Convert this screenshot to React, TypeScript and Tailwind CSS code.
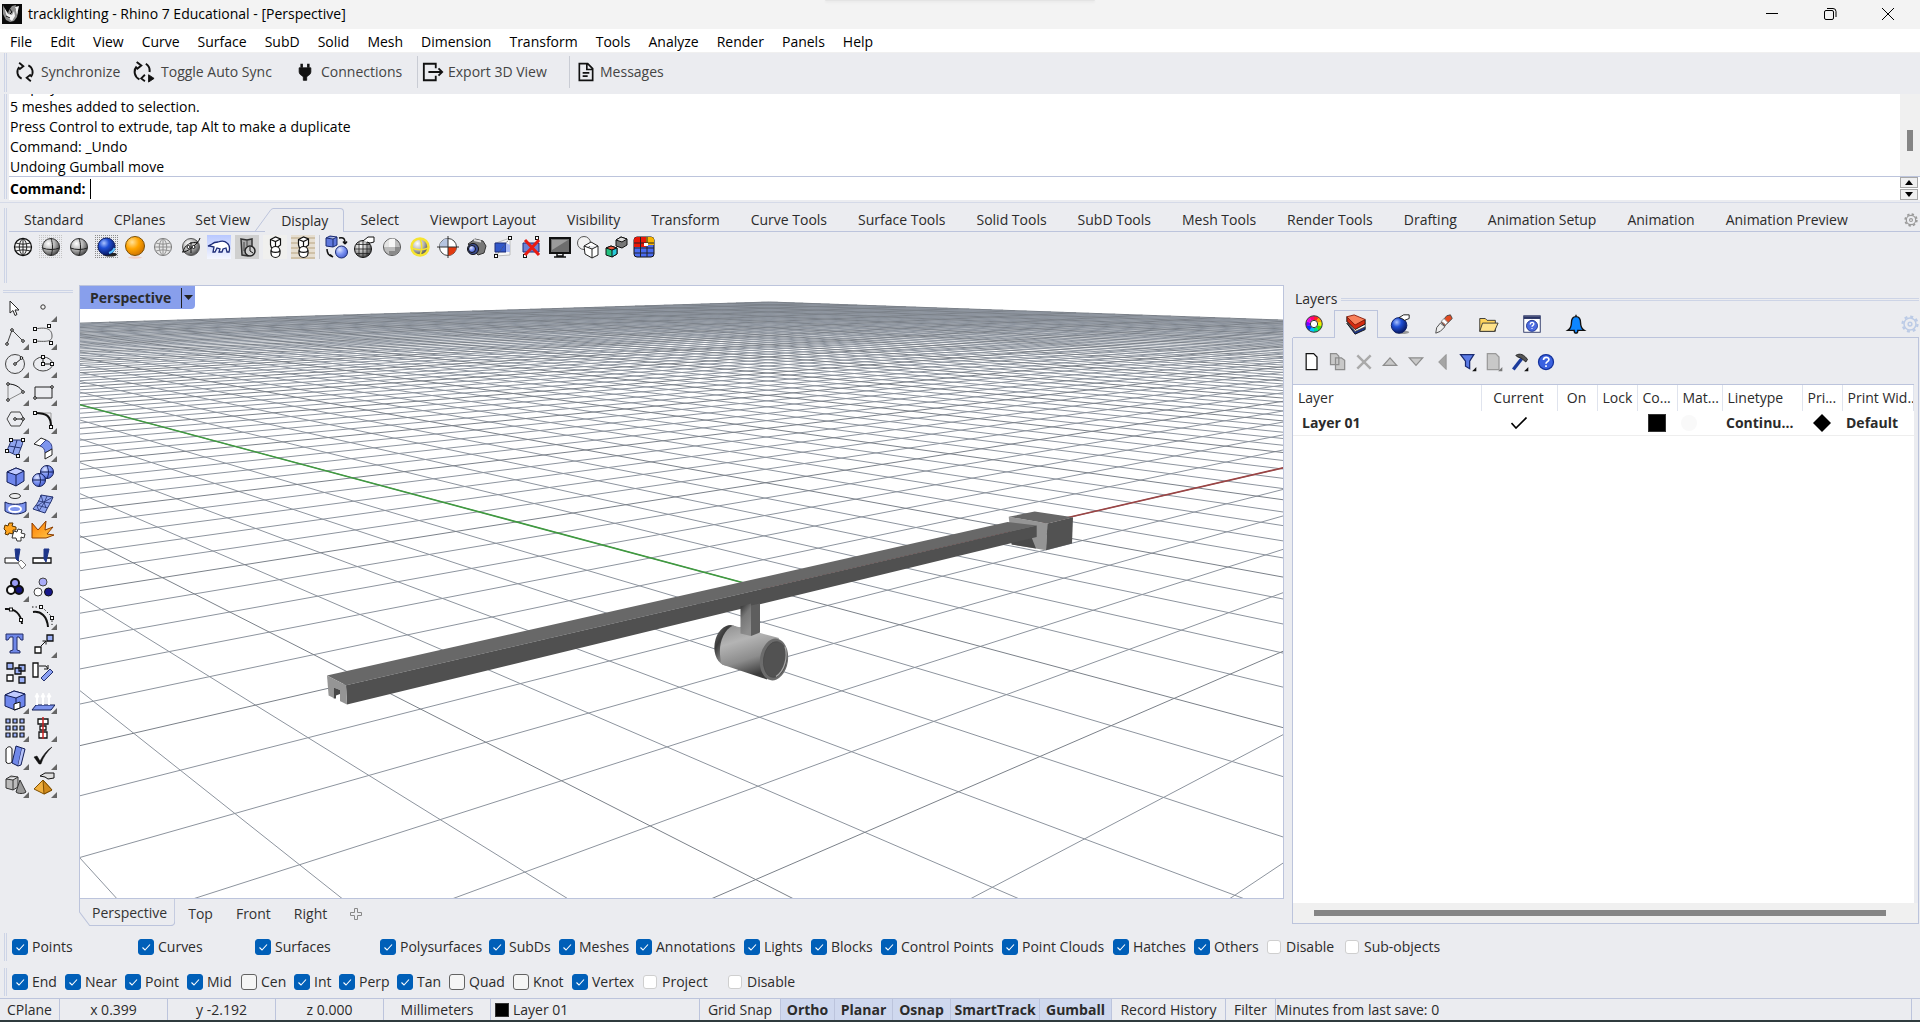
import type { ReactNode } from "react"

/* ---------- helpers ---------- */

function Svg({ children, className = "size-6" }: { children: ReactNode; className?: string }) {
    return (
        <svg viewBox="0 0 24 24" className={className} fill="none" stroke="#111" strokeWidth="1" aria-hidden="true">
            {children}
        </svg>
    )
}

function Gradients() {
    return (
        <svg className="absolute size-0" aria-hidden="true">
            <defs>
                <radialGradient id="gGray" cx="0.35" cy="0.3" r="0.75">
                    <stop offset="0" stopColor="#fff" />
                    <stop offset="0.5" stopColor="#b5b5b5" />
                    <stop offset="1" stopColor="#444" />
                </radialGradient>
                <radialGradient id="gBlue" cx="0.35" cy="0.3" r="0.75">
                    <stop offset="0" stopColor="#a9c2ff" />
                    <stop offset="0.4" stopColor="#1f4fd6" />
                    <stop offset="1" stopColor="#06145a" />
                </radialGradient>
                <radialGradient id="gOrange" cx="0.35" cy="0.3" r="0.8">
                    <stop offset="0" stopColor="#ffe29a" />
                    <stop offset="0.45" stopColor="#ffa400" />
                    <stop offset="1" stopColor="#c56a00" />
                </radialGradient>
                <radialGradient id="gPeri" cx="0.35" cy="0.3" r="0.8">
                    <stop offset="0" stopColor="#dfe6ff" />
                    <stop offset="0.5" stopColor="#7c93f2" />
                    <stop offset="1" stopColor="#4158c8" />
                </radialGradient>
                <linearGradient id="gBurst" x1="0" y1="0" x2="1" y2="1">
                    <stop offset="0" stopColor="#ff7a00" />
                    <stop offset="1" stopColor="#ffc94a" />
                </linearGradient>
                <linearGradient id="gSky" x1="0" y1="0" x2="0" y2="1">
                    <stop offset="0" stopColor="#b9c8ff" />
                    <stop offset="1" stopColor="#f4f6ff" />
                </linearGradient>
                <linearGradient id="gCyl" x1="0" y1="0" x2="0.35" y2="1">
                    <stop offset="0" stopColor="#8e8e8e" />
                    <stop offset="0.35" stopColor="#b4b4b4" />
                    <stop offset="0.7" stopColor="#8c8c8c" />
                    <stop offset="1" stopColor="#3c3c3c" />
                </linearGradient>
                <linearGradient id="gStem" x1="0" y1="0" x2="0.4" y2="1">
                    <stop offset="0" stopColor="#2c2c2c" />
                    <stop offset="0.45" stopColor="#777" />
                    <stop offset="1" stopColor="#8e8e8e" />
                </linearGradient>
                <linearGradient id="gBack" x1="0" y1="0" x2="1" y2="0.6">
                    <stop offset="0" stopColor="#6c6c6c" />
                    <stop offset="0.3" stopColor="#3a3a3a" />
                    <stop offset="0.7" stopColor="#9a9a9a" />
                </linearGradient>
                <pattern id="dots" width="2" height="2" patternUnits="userSpaceOnUse">
                    <rect width="1" height="1" fill="#8b8b8b" />
                </pattern>
                <pattern id="dotsLight" width="2" height="2" patternUnits="userSpaceOnUse">
                    <rect width="1" height="1" fill="#c4c4c4" />
                </pattern>
            </defs>
        </svg>
    )
}

const wires = <path d="M12 3.500v17M3.500 12h17M12 3.500c-5 4-5 13 0 17M12 3.500c5 4 5 13 0 17M5 8c4 1.500 10 1.500 14 0M5 16c4-1.500 10-1.500 14 0" />

const node = (x: number, y: number) => (
    <rect x={x - 1.5} y={y - 1.5} width="3" height="3" fill="#fff" stroke="#111" />
)
const dot = (x: number, y: number) => <circle cx={x} cy={y} r="1.3" fill="#fff" stroke="#111" />

/* box over cylinder used by the artistic and pen display modes */
const canShape = (
    <>
        <path d="M7.500 4.500l5-2.500 5 2v6l-4 3h-5l-1-3z" fill="#fff" />
        <path d="M7.500 4.500l5 2 5-2.500M12.500 6.500v5" />
        <rect x="8" y="11.500" width="9" height="11" rx="4.500" fill="#fff" />
        <path d="M8 15.500c1 2.500 8 2.500 9 0" />
    </>
)

/* ---------- display toolbar ---------- */

const displayTools: { name: string; icon: ReactNode }[] = [
    { name: "Wireframe", icon: <><circle cx="12" cy="12" r="8.500" fill="#f4f4f4" strokeWidth="1.300" /><g strokeWidth="0.900">{wires}</g></> },
    {
        name: "Shaded viewport",
        icon: <><rect width="24" height="24" fill="url(#dotsLight)" stroke="none" /><circle cx="12" cy="12" r="8.500" fill="url(#gGray)" stroke="#333" /><path d="M3.500 13c5 2 12 2 17 0M12 3.500c2 5 2 12 0 17" stroke="#222" /></>,
    },
    {
        name: "Shaded",
        icon: <><circle cx="12" cy="12" r="8.500" fill="url(#gGray)" stroke="#333" /><path d="M3.500 13c5 2 12 2 17 0M12 3.500c2 5 2 12 0 17" stroke="#222" /></>,
    },
    {
        name: "Rendered",
        icon: <><rect width="24" height="24" fill="url(#dots)" stroke="none" /><ellipse cx="15" cy="19.500" rx="7" ry="2" fill="#222" stroke="none" /><circle cx="11.500" cy="11.500" r="8.500" fill="url(#gBlue)" stroke="#0a1c66" /><path d="M14 18c3-1 5-3 5.500-5" stroke="#5cc3ff" strokeWidth="2" /></>,
    },
    { name: "Raytraced", icon: <><ellipse cx="12" cy="22.500" rx="7" ry="1.200" fill="#f1cfc6" stroke="none" /><circle cx="12" cy="11" r="9.500" fill="url(#gOrange)" stroke="#7b5006" /></> },
    { name: "Ghosted", icon: <><circle cx="12" cy="12" r="8.500" fill="#e6e6e6" stroke="#777" /><g stroke="#888" strokeWidth="0.900">{wires}</g></> },
    {
        name: "X-Ray",
        icon: <><circle cx="12" cy="12" r="8.500" fill="url(#gGray)" stroke="#555" /><path d="M3 17C8 18 20 8 21 3M4 17c1-7 9-11 15-9" /><circle cx="9.500" cy="12" r="1.500" fill="#fff" /><circle cx="14.500" cy="12" r="1.500" fill="#fff" /><path d="M12 7v11" /></>,
    },
    {
        name: "Arctic",
        icon: <><rect width="24" height="24" fill="url(#gSky)" stroke="none" /><path d="M1 11l4-2c2-2 4-2 6-2 3-1 7-1 9 1 3 2 3 5 2 9h-2l-1-4-3 1-1 3h-3l1-3-3-1-2 4H6l1-5-4-1z" fill="#fff" stroke="#1d2c78" strokeWidth="1.300" /></>,
    },
    {
        name: "Technical",
        icon: <><rect width="24" height="24" fill="#cfcfcf" stroke="none" /><path d="M6 4l6 1 5-1v11l-4 6-6-1z" fill="#a9a9a9" stroke="#333" strokeWidth="1.500" /><path d="M9 7v9M12 5v6" stroke="#444" /><circle cx="15" cy="16" r="5" fill="#cfcfcf" stroke="#222" strokeWidth="1.500" /><path d="M15 12v4l3 2" /></>,
    },
    { name: "Artistic", icon: <><rect width="24" height="24" fill="#f0f0ee" stroke="none" /><g strokeWidth="1.200">{canShape}</g></> },
    {
        name: "Pen",
        icon: <><rect width="24" height="24" fill="#e6ded0" stroke="none" /><path d="M0 3h24M0 8h24M0 13h24M0 18h24M0 23h24" stroke="#cfc1a8" strokeWidth="2" /><g strokeWidth="1.200">{canShape}</g></>,
    },
    {
        name: "Toggle shading",
        icon: <><path d="M2 3l4-2 7 1v8l-4 2-7-1zM2 3l7 1 4-2M9 4v8" fill="#5f78dc" stroke="#1a2a70" /><circle cx="17.500" cy="17" r="6" fill="url(#gPeri)" stroke="#1a2a70" /><path d="M15 3c5-1 6 1 6 5M21 9l-2-2.500M21 9l2-2.500M3 14c0 5 2 7 6 8M9 22l-3-2.500" strokeWidth="1.500" /></>,
    },
    {
        name: "Shade options",
        icon: <><circle cx="11" cy="14" r="8.500" fill="url(#gGray)" /><path d="M11 5.500v17M2.500 14h17M4 9.500h14M4 18.500h14M7 7v14M15 7v14" stroke="#222" strokeWidth="0.800" /><path d="M11 6l5-4h6v5l-4 1-3-1" fill="#fff" /></>,
    },
    { name: "Flat shade", icon: <><circle cx="12" cy="12" r="8.500" fill="#bcbcbc" stroke="#555" /><path d="M4 12h5V4.500A8 8 0 0 0 4 12z" fill="#e4e4e4" stroke="none" /><path d="M9 12h6V4a8 8 0 0 0-6 .4z" fill="#f6f6f6" stroke="none" /><path d="M15 12h5a8 8 0 0 1-5 7.500zM9 16h6v4H9z" fill="#8a8a8a" stroke="none" /></> },
    {
        name: "Shade selected",
        icon: <><circle cx="12" cy="12" r="8.500" fill="url(#gGray)" stroke="#f6e431" strokeWidth="2.500" /><path d="M3.500 13c5 2 12 2 17 0M12 3.500c2 5 2 12 0 17" stroke="#f6e431" strokeWidth="1.500" /></>,
    },
    {
        name: "Display target",
        icon: <><circle cx="12" cy="12" r="8.500" fill="#fff" stroke="#444" /><path d="M12 12V3.500A8.500 8.500 0 0 0 3.500 12z" fill="#b6c4e0" stroke="none" /><path d="M12 12h8.500a8.500 8.500 0 0 1-8.500 8.500z" fill="#e23a10" stroke="none" /><path d="M12 1v22M1 12h22" stroke="#333" /></>,
    },
    {
        name: "Capture",
        icon: <><path d="M4 9l7-5 8 2 3 5-2 7-6 2z" fill="#777" stroke="#333" /><path d="M10 5l7 1.500" stroke="#ddd" strokeWidth="2" /><circle cx="9" cy="14" r="5.500" fill="#3b4c8f" /><circle cx="8" cy="14" r="3.500" fill="url(#gPeri)" /></>,
    },
    {
        name: "Clipping plane",
        icon: <><path d="M18 3v17L4 21V8z" fill="#f7f7f7" stroke="#bbb" /><path d="M3 8h11v9H3z" fill="#3157c9" stroke="#1c2d78" /><path d="M14 8l4 2v7l-4 0" fill="#a9baf5" stroke="none" /><path d="M4 21L18 3" stroke="#555" strokeDasharray="1 1" />{node(4, 21)}{node(18, 3)}</>,
    },
    {
        name: "Disable clipping",
        icon: <><path d="M3 8h16v9H3z" fill="#6c83d6" stroke="#1c2d78" />{node(5, 21)}{node(17, 3)}<path d="M5 5l14 15M19 5L5 20" stroke="#e81b12" strokeWidth="3" /></>,
    },
    {
        name: "Full screen",
        icon: <><path d="M2 3h20v15H2z" fill="#6d6d6d" strokeWidth="2" /><path d="M4 5h16L4 15z" fill="#9b9b9b" stroke="none" /><path d="M9 18h6v3H9zM6 22h12" strokeWidth="1.500" /></>,
    },
    {
        name: "Silhouettes",
        icon: <><circle cx="8" cy="8" r="6.500" fill="#f2f2f2" stroke="#555" /><path d="M8 11l7-4 7 4v9l-6 3-7-4zM8 11l8 3 6-3M16 14v9" fill="#fff" stroke="#222" /></>,
    },
    {
        name: "Color by face",
        icon: <><path d="M12 5l5-3 6 2v6l-5 3-6-2z" fill="#777" /><path d="M12 5l6 2 5-3-6-2z" fill="#ddd" /><path d="M2 13l5-2 6 2v6l-5 3-6-2z" fill="#23c07d" /><path d="M2 13l6 2 5-2-6-2z" fill="#f05a3c" /><path d="M8 15l5-2v6l-5 3z" fill="#27c9d8" /></>,
    },
    {
        name: "Texture grid",
        icon: <><rect x="2" y="2" width="20" height="20" rx="3" fill="#4a6cf0" /><path d="M2 5a3 3 0 0 1 3-3h9v10H2z" fill="#e81708" stroke="none" /><path d="M14 2h5a3 3 0 0 1 3 3v5h-8z" fill="#f7b500" stroke="none" /><path d="M8.500 2v20M15 2v20M2 8h20M2 13h20M2 18h20" stroke="#22222a" /><rect x="12" y="8" width="4" height="3" fill="#fff" stroke="none" /></>,
    },
]

/* ---------- left tool palette ---------- */

const paletteTools: { name: string; icon: ReactNode; more?: boolean }[] = [
    { name: "Select", icon: <path d="M7 5v12l3-2.500 2 5 2-1-2-4.500h4z" fill="#fff" stroke="#222" /> },
    { name: "Point", icon: <circle cx="12" cy="11" r="2.200" fill="#f4f4f4" stroke="#333" />, more: true },
    { name: "Polyline", icon: <><path d="M4 20l5-14 11 11" stroke="#444" />{dot(4, 20)}{dot(9, 6)}{dot(20, 17)}</>, more: true },
    { name: "Curve", icon: <><path d="M4 5c14-3 17 2 17 7s-3 6-17 5" stroke="#555" />{node(4, 5)}{node(18, 2)}{node(4, 17)}{node(20, 19)}</>, more: true },
    { name: "Circle", icon: <><circle cx="12" cy="12" r="9.500" stroke="#444" /><path d="M12 12l7-6" />{dot(12, 12)}{dot(18.500, 6)}</>, more: true },
    { name: "Ellipse", icon: <><ellipse cx="12" cy="12" rx="9.500" ry="7" stroke="#444" /><path d="M12 12h9M12 12V5" />{node(12, 5)}{node(12, 12)}{node(21, 12)}</>, more: true },
    { name: "Arc", icon: <><path d="M5 4v16l15-8" stroke="#888" /><path d="M5 4c7 0 12 3 15 8" />{dot(5, 4)}{dot(20, 12)}{dot(5, 20)}</>, more: true },
    { name: "Rectangle", icon: <><path d="M4 7h17v11H4z" stroke="#222" />{dot(21, 7)}{dot(4, 18)}</>, more: true },
    { name: "Polygon", icon: <><path d="M8 4h9l4 7-4 7H8l-4-7z" stroke="#444" /><path d="M12 11h8" />{dot(12, 11)}{dot(20, 11)}</>, more: true },
    { name: "Fillet", icon: <><path d="M4 5h16v14" stroke="#999" /><path d="M4 5c12 0 16 3 16 14" strokeWidth="2" />{node(4, 5)}{node(20, 19)}</>, more: true },
    {
        name: "Surface from points",
        icon: <><path d="M8 4h12c0 5-3 9-5 16L4 15c1-4 3-6 4-11z" fill="#90a5ef" stroke="#23316f" /><path d="M14 4c-1 5-3 9-4 13M6 10l12 2" stroke="#23316f" />{node(8, 4)}{node(20, 4)}{node(4, 15)}{node(15, 20)}</>,
        more: true,
    },
    {
        name: "Loft",
        icon: <><path d="M3 8l7-6 5 2-6 6z" fill="#fff" stroke="#222" /><path d="M9 10l6-6c5 2 6 5 6 9l-7 4c0-4-2-6-5-7z" fill="#7d94ee" stroke="#33418a" /><path d="M14 17l7-4v6l-7 4z" fill="#fff" stroke="#222" /></>,
        more: true,
    },
    { name: "Box", icon: <><path d="M4 8l9-4 8 3v10l-8 5-9-4z" fill="#6e86ec" stroke="#111c55" /><path d="M4 8l9-4 8 3-8 4z" fill="#c1ccff" stroke="#111c55" /><path d="M13 11v11" stroke="#111c55" /></>, more: true },
    { name: "Boolean", icon: <><circle cx="16" cy="8" r="6.500" fill="url(#gPeri)" stroke="#111c55" /><circle cx="8" cy="16" r="6.500" fill="url(#gPeri)" stroke="#111c55" /><path d="M16 2c2 4 2 9 0 12M10 8h12M8 10c2 4 2 9 0 12M2 16h12" stroke="#111c55" /></>, more: true },
    { name: "Revolve surface", icon: <><ellipse cx="12" cy="4" rx="5.500" ry="2.500" fill="#eee" stroke="#333" /><path d="M2 10c5 3 16 3 21 0v9c-5 4-16 4-21 0z" fill="#7d94ee" stroke="#111c55" /><ellipse cx="12" cy="17" rx="6" ry="3" stroke="#fff" strokeWidth="2" /></>, more: true },
    { name: "Mesh", icon: <><path d="M10 3l12 2c-2 6-5 9-8 16L2 17c3-4 6-7 8-14z" fill="#90a5ef" stroke="#23316f" /><path d="M16 4c-2 6-5 10-8 15M7 9l12 2M5 13l12 3M10 3l2 7-6 4 2 5M22 5l-9 5 2 6" stroke="#23316f" strokeWidth="0.800" /></>, more: true },
    {
        name: "Group puzzle",
        icon: <><path d="M2 5l3 1 1-3h4l-1 3 4 1v3l-3 0 0 4-4-1-1 2-3-1 1-3-2-2z" fill="#ffa51e" stroke="#5a3500" /><path d="M11 11l3 1 1-3 4 1-1 3 4 1-1 4-3-1 0 4-4 0-1-3-4 0 1-4z" fill="#fff" stroke="#333" /></>,
    },
    { name: "Explode", icon: <path d="M1 3l6 7 8-9-1 9 8-3-6 7 7 1-8 3H1z" fill="url(#gBurst)" stroke="#8a3c00" /> },
    { name: "Trim", icon: <><path d="M2 10h12l3 5H2z" fill="#fff" /><path d="M12 1h5l-2 12-2-2z" fill="#1e368a" stroke="#1e368a" /><path d="M15 15l3-3 5 5-4 4z" fill="#fff" stroke="#777" /></> },
    { name: "Split", icon: <><path d="M2 10h18v5H2z" fill="#fff" strokeWidth="1.300" /><path d="M13 1h5l-3 13-2-3z" fill="#1e368a" stroke="#1e368a" /></> },
    { name: "Join", icon: <g strokeWidth="2"><circle cx="12" cy="7" r="4" fill="#9a9cf5" /><circle cx="8" cy="14" r="4" fill="#fff" /><circle cx="16" cy="14" r="4" fill="#15157a" /></g>, more: true },
    { name: "Ungroup", icon: <><circle cx="12" cy="6" r="4" fill="#a9abf7" stroke="#444" /><circle cx="7" cy="16" r="4" fill="#fff" stroke="#444" /><circle cx="17.500" cy="16" r="4" fill="#17178a" stroke="#111" /></> },
    { name: "Edit points", icon: <><path d="M2 5c10-1 16 5 17 15" strokeWidth="2" />{node(8, 5.500)}{node(18, 16)}</> },
    { name: "Control points", icon: <><path d="M2 8c8-1 14 4 15 15" strokeWidth="2" /><path d="M1 3h8M11 3l10 10v8" strokeDasharray="1.500 2" />{node(10, 3)}{node(21, 14)}</>, more: true },
    { name: "Text object", icon: <path d="M3 2h17v6h-2l-2-3h-2v13l3 1v2H7v-2l3-1V5H7L5 8H3z" fill="#7088e8" stroke="#222c66" /> },
    { name: "Move", icon: <><path d="M4 15h6v6H4z" fill="#fff" strokeWidth="1.300" /><path d="M16 3h6v6h-6z" fill="#9bb0f7" strokeWidth="1.300" /><path d="M10 14l5-5M11.500 9H15v3.500" /></>, more: true },
    { name: "Copy", icon: <><path d="M4 3h6v6H4zM12 8h6v6h-6zM16 17h6v6h-6zM16 5h6v6h-6z" fill="#9bb0f7" strokeWidth="1.300" /><path d="M4 15h6v6H4z" fill="#fff" strokeWidth="1.300" /></> },
    { name: "Rotate", icon: <><path d="M2 3h5v14H2z" fill="#fff" strokeWidth="1.300" /><path d="M8 6h7l2 3M17 5v4h-4" /><path d="M10 18l9-9 3 3-9 9z" fill="#8ba0f3" stroke="#23316f" /></> },
    { name: "Cut box", icon: <><path d="M2 7l9-4 11 3v12l-10 4-10-4z" fill="#6e86ec" stroke="#111c55" /><path d="M2 7l9-4 11 3-9 4z" fill="#c1ccff" stroke="#111c55" /><path d="M13 10v6" stroke="#111c55" /><path d="M11 16l6-2v6l-6 2z" fill="#fff" /></>, more: true },
    { name: "Project", icon: <><path d="M5 17h19l-4 5H1z" fill="#7d94ee" stroke="#111c55" /><path d="M6 17V8M12 17V8M18 17V8" stroke="#fff" strokeWidth="2" /><path d="M4 9l2-4 2 4zM10 9l2-4 2 4zM16 9l2-4 2 4z" fill="#fff" stroke="#fff" /></>, more: true },
    { name: "Array", icon: <path d="M3 3h4v4H3zM10 3h4v4h-4zM17 3h4v4h-4zM3 10h4v4H3zM10 10h4v4h-4zM17 10h4v4h-4zM3 17h4v4H3zM10 17h4v4h-4zM17 17h4v4h-4z" fill="#9bb0f7" strokeWidth="1.200" />, more: true },
    { name: "Align", icon: <><path d="M7 3h10v5H7zM9 10h6v4H9zM8 16h8v6H8z" fill="#fff" strokeWidth="1.300" /><path d="M12 1v22" stroke="#c22" strokeWidth="1.500" /></>, more: true },
    { name: "Flow", icon: <><path d="M3 5c2-3 5-3 6 0v13c-2 2-5 2-6 0z" fill="#fff" /><path d="M13 2l6 2-4 18-6-3z" fill="#7088e8" stroke="#111c55" /><path d="M19 4l3 1-4 16-3 1" fill="#b5c2fa" stroke="#111c55" /></>, more: true },
    { name: "Check", icon: <path d="M3 13l3-1 3 5C12 11 16 6 21 3c-5 5-9 10-11 17H8z" fill="#111" strokeWidth="0.500" />, more: true },
    { name: "Primitives", icon: <><path d="M3 7l5-3 7 1v10l-5 3-7-2zM3 7l7 1 5-3M10 8v10" fill="#bbb" stroke="#333" /><path d="M17 8l6 12c-2 2-8 2-10 0z" fill="#999" stroke="#333" /></>, more: true },
    { name: "Render view", icon: <><path d="M12 8l9 10-8 4-10-5z" fill="#f0b040" stroke="#7d4e00" /><path d="M12 8l1 14 8-4z" fill="#d08a1c" stroke="#7d4e00" /><path d="M9 4l5-3h9v5l-6 1-3-2z" fill="#ddd" /></>, more: true },
]

/* ---------- layers panel ---------- */

const hue = ["#ff2020", "#ff9a00", "#e9f200", "#3fe000", "#00dd91", "#00c3ff", "#0037ff", "#7900ff", "#f000e8", "#ff0074"]

const panelTabs: { name: string; icon: ReactNode }[] = [
    {
        name: "Properties",
        icon: <>{hue.map((c, i) => <circle key={c} cx="12" cy="12" r="6.500" stroke={c} strokeWidth="4.500" strokeDasharray="4.200 40" transform={`rotate(${i * 36 - 90} 12 12)`} />)}<circle cx="12" cy="12" r="9" stroke="#222" /><circle cx="12" cy="12" r="4" fill="#fff" stroke="#222" /></>,
    },
    {
        name: "Layers",
        icon: <><path d="M2 10l9 12 11-5v-3L11 19z" fill="#1a3590" /><path d="M2 8l9 11 11-5v-3L11 15z" fill="#fff" stroke="#555" /><path d="M2 3l9 8 11-5v5l-11 6L2 8z" fill="#d42a10" /><path d="M2 3l8-2 12 5-11 6z" fill="#f9805a" stroke="#8a1a08" /></>,
    },
    { name: "Materials", icon: <><ellipse cx="14" cy="21" rx="8" ry="2" fill="#999" stroke="none" /><circle cx="11" cy="13.500" r="8.500" fill="url(#gBlue)" stroke="#0a1c66" /><path d="M11 5l5-3h6v4l-5 2-3-2z" fill="#fff" /></> },
    { name: "Material library", icon: <><path d="M15 3l4-1 2 4-8 8-4-4z" fill="#e24b22" stroke="#444" /><path d="M12 6l4 4-2 3-5-4z" fill="#fff" stroke="#888" /><path d="M8 11l5 4-5 5-5 2 1-6z" fill="#eee" stroke="#444" /></> },
    { name: "Libraries", icon: <><path d="M3 6h6l2 2h9v12H3z" fill="#ffd35a" stroke="#333" /><path d="M6 11h17l-4 9H3z" fill="#ffe28a" stroke="#333" /></> },
    {
        name: "Help",
        icon: <><rect x="3" y="3" width="18" height="18" fill="#fff" stroke="#2a3566" /><path d="M3 5h18" stroke="#2a3566" strokeWidth="3" /><circle cx="12" cy="14" r="6" fill="#4c6be0" stroke="#1d338f" /><path d="M10 12.500c0-3 4-3 4-.5 0 1.500-2 1.500-2 3M12 16.500v1" stroke="#fff" strokeWidth="1.500" /></>,
    },
    { name: "Notifications", icon: <path d="M12 2v2c-4 0-5 3-5 7 0 4-1 6-4 8h7c0 4 4 4 4 0h7c-3-2-4-4-4-8 0-4-1-7-5-7" fill="#0d86ff" stroke="#111" strokeWidth="1.500" /> },
]

const layerTools: { name: string; icon: ReactNode }[] = [
    { name: "New layer", icon: <path d="M5 2h9l4 4v15H5z" fill="#fff" strokeWidth="1.500" /> },
    { name: "New sublayer", icon: <path d="M3 2h7l3 3v10H3zM9 7h7l4 3v11H9z" fill="#c8c8c8" stroke="#8d8d8d" strokeWidth="1.500" /> },
    { name: "Delete", icon: <path d="M4 4l16 16M20 4L4 20" stroke="#aaa" strokeWidth="3" /> },
    { name: "Move up", icon: <path d="M12 7l8 9H4z" fill="#c9c9c9" stroke="#8d8d8d" strokeWidth="1.500" /> },
    { name: "Move down", icon: <path d="M4 7h16l-8 9z" fill="#c9c9c9" stroke="#8d8d8d" strokeWidth="1.500" /> },
    { name: "Move out", icon: <path d="M17 3v18l-9-9z" fill="#a5a5a5" stroke="#8d8d8d" /> },
    { name: "Filter", icon: <><path d="M3 3h16l-5 8v9l-5-3v-6z" fill="#5b7be6" stroke="#1a2a70" strokeWidth="1.500" /><path d="M22 18v5h-5z" fill="#111" stroke="none" /></> },
    { name: "Layer state", icon: <><path d="M4 2h10l4 4v15H4z" fill="#c8c8c8" stroke="#999" strokeWidth="1.500" /><path d="M22 18v5h-5z" fill="#777" stroke="none" /></> },
    { name: "Tools", icon: <><path d="M4 21L14 8" stroke="#1d3c9c" strokeWidth="4" /><path d="M7 4c5-3 10-1 14 5l-2 3-6-5-4-1z" fill="#555" /><path d="M22 18v5h-5z" fill="#111" stroke="none" /></> },
    { name: "Layer help", icon: <><circle cx="12" cy="12" r="9" fill="#3b62e0" stroke="#14329c" strokeWidth="1.500" /><path d="M9 9.500c0-4 6.500-4 6.500-.5 0 2.500-3.500 2.500-3.500 5M12 16v2" stroke="#fff" strokeWidth="2" /></> },
]

/* ---------- perspective construction plane ---------- */

const GRID = 70
const ORIGIN = [762.7, 588.5]
const VANISH_X = [2190, 259]
const VANISH_Y = [-465, 259]
const GX = 0.0437
const GY = 0.0502

function project(x: number, y: number) {
    const w = 1 + GX * x + GY * y
    const px = (ORIGIN[0] + GX * x * VANISH_X[0] + GY * y * VANISH_Y[0]) / w
    const py = (ORIGIN[1] + GX * x * VANISH_X[1] + GY * y * VANISH_Y[1]) / w
    return `${px.toFixed(1)} ${py.toFixed(1)}`
}

function gridPath(major: boolean) {
    let d = ""
    for (let k = -GRID; k <= GRID; k++) {
        if ((k % 5 === 0) !== major) continue
        // stop each line just before it passes behind the camera
        const nearY = Math.max(-GRID, (0.12 - 1 - GX * k) / GY)
        if (nearY < GRID) d += `M${project(k, nearY)}L${project(k, GRID)}`
        const nearX = Math.max(-GRID, (0.12 - 1 - GY * k) / GX)
        if (nearX < GRID) d += `M${project(nearX, k)}L${project(GRID, k)}`
    }
    return d
}

const minorGrid = gridPath(false)
const majorGrid = gridPath(true)

function Scene() {
    return (
        <svg viewBox="80 286 1203 613" preserveAspectRatio="xMidYMid slice" className="absolute inset-0 size-full" aria-label="Perspective view">
            <path d={minorGrid} stroke="#8d949e" strokeWidth="1" fill="none" />
            <path d={majorGrid} stroke="#7b8189" strokeWidth="1" fill="none" />
            <path d={`M${project(0, 0)}L${project(0, GRID)}`} stroke="#3f9a3f" strokeWidth="1.600" />
            <path d={`M${project(0, 0)}L${project(GRID, 0)}`} stroke="#9b4444" strokeWidth="1.600" />

            {/* power feed */}
            <path d="M1008.700 517.300L1047.400 524 1046 550.700 1011.700 545z" fill="#959595" />
            <path d="M1011 541L1030 534 1036 549 1011.700 545z" fill="#4a4a4a" />
            <path d="M1047.400 524L1073 517.700 1072 544 1046 550.700z" fill="#525252" />
            <path d="M1008.700 517.300L1034.700 512 1073 517.700 1047.400 524z" fill="#676767" />

            {/* track */}
            <path d="M327 676L1007.600 522.500 1036.700 526 346 685.700z" fill="#686868" />
            <path d="M346 685.700L1036.700 526V537.500L347 705z" fill="#505050" />
            <path d="M327 676L346 685.700 347 705 328.600 696z" fill="#959595" />
            <path d="M333.700 688L340 690.500V702.500L333.700 699z" fill="#fff" />
            <path d="M333.700 688L340 690.500V694.500L336 696V699L333.700 699z" fill="#484848" />

            {/* lamp */}
            <ellipse cx="729" cy="646" rx="14.500" ry="20.500" transform="rotate(8 729 646)" fill="url(#gBack)" />
            <path d="M733 626L779 638.500 767 680 722 665C717 650 721 632 733 626z" fill="url(#gCyl)" />
            <path d="M740.500 607L751 604V636.500L740.500 634z" fill="url(#gStem)" />
            <path d="M751 606L760 604V633L751 636.500z" fill="#5e5e5e" />
            <ellipse cx="774" cy="660" rx="14" ry="21" transform="rotate(8 774 660)" fill="#6c6c6c" />
            <ellipse cx="775" cy="660" rx="11.500" ry="18" transform="rotate(8 775 660)" fill="#525252" stroke="#444" strokeWidth="0.500" />
            <path d="M785 647C788 657 785 671 776 677" fill="none" stroke="#a8a8a8" strokeWidth="1.200" />
        </svg>
    )
}

/* ---------- data ---------- */

const menus = ["File", "Edit", "View", "Curve", "Surface", "SubD", "Solid", "Mesh", "Dimension", "Transform", "Tools", "Analyze", "Render", "Panels", "Help"]
const tabsBefore = ["Standard", "CPlanes", "Set View"]
const tabsAfter = [
    "Select", "Viewport Layout", "Visibility", "Transform", "Curve Tools", "Surface Tools", "Solid Tools", "SubD Tools",
    "Mesh Tools", "Render Tools", "Drafting", "Animation Setup", "Animation", "Animation Preview",
]

type Check = { label: string; state?: "off" | "disabled"; width?: string }

const filters: Check[] = [
    { label: "Points", width: "w-[126px]" },
    { label: "Curves", width: "w-[117px]" },
    { label: "Surfaces", width: "w-[125px]" },
    { label: "Polysurfaces", width: "w-[109px]" },
    { label: "SubDs", width: "w-[70px]" },
    { label: "Meshes", width: "w-[77px]" },
    { label: "Annotations", width: "w-[108px]" },
    { label: "Lights", width: "w-[67px]" },
    { label: "Blocks", width: "w-[70px]" },
    { label: "Control Points", width: "w-[121px]" },
    { label: "Point Clouds", width: "w-[111px]" },
    { label: "Hatches", width: "w-[81px]" },
    { label: "Others", width: "w-[72px]" },
    { label: "Disable", state: "disabled", width: "w-[78px]" },
    { label: "Sub-objects", state: "disabled" },
]

const snaps: Check[] = [
    { label: "End", width: "w-[53px]" },
    { label: "Near", width: "w-[60px]" },
    { label: "Point", width: "w-[62px]" },
    { label: "Mid", width: "w-[54px]" },
    { label: "Cen", state: "off", width: "w-[53px]" },
    { label: "Int", width: "w-[45px]" },
    { label: "Perp", width: "w-[58px]" },
    { label: "Tan", width: "w-[52px]" },
    { label: "Quad", state: "off", width: "w-[64px]" },
    { label: "Knot", state: "off", width: "w-[59px]" },
    { label: "Vertex", width: "w-[70px]" },
    { label: "Project", state: "disabled", width: "w-[85px]" },
    { label: "Disable", state: "disabled" },
]

function CheckRow({ items, prefix }: { items: Check[]; prefix: string }) {
    return (
        <div className="flex h-[35px] items-center">
            <div className="ml-1 mr-[5px] h-7 w-[3px] border-x border-[#cdd4e6]" />
            {items.map((item) => {
                const id = `${prefix}-${item.label}`
                return (
                    <div key={id} className={`flex shrink-0 items-center whitespace-nowrap ${item.width ?? ""}`}>
                        <span className="relative mr-1 size-4">
                            <input
                                id={id}
                                type="checkbox"
                                defaultChecked={!item.state}
                                disabled={item.state === "disabled"}
                                className="peer block size-4 appearance-none rounded-[3px] border border-[#626262] bg-[#f5f5f5] checked:border-[#005fb8] checked:bg-[#005fb8] disabled:m-px disabled:size-3.5 disabled:border-[#cfcfcf] disabled:bg-white"
                            />
                            <svg viewBox="0 0 16 16" className="pointer-events-none absolute inset-0 hidden peer-checked:block" aria-hidden="true">
                                <path d="M4.500 8.500l2.500 2.500 5-5.500" fill="none" stroke="#fff" strokeWidth="1.100" />
                            </svg>
                        </span>
                        <label htmlFor={id}>{item.label}</label>
                    </div>
                )
            })}
        </div>
    )
}

function Gear({ className }: { className: string }) {
    return (
        <svg viewBox="0 0 24 24" className={className} fill="none" stroke="currentColor" strokeWidth="2" aria-hidden="true">
            <circle cx="12" cy="12" r="8" />
            <circle cx="12" cy="12" r="10" strokeDasharray="4 3.850" strokeWidth="3" />
            <circle cx="12" cy="12" r="2.500" />
        </svg>
    )
}

function Grip() {
    return <div className="ml-1 w-[3px] shrink-0 border-x border-[#cdd4e6]" />
}

const modes = [
    { label: "Ortho", width: "w-[54px]" },
    { label: "Planar", width: "w-[58px]" },
    { label: "Osnap", width: "w-[58px]" },
    { label: "SmartTrack", width: "w-[89px]" },
    { label: "Gumball", width: "w-[72px]" },
]

/* ---------- page ---------- */

export default function App() {
    return (
        <div className="flex h-screen min-h-[700px] flex-col overflow-hidden bg-[#ebecf0] font-['Open_Sans','Noto_Sans',sans-serif] text-[14px] leading-5 text-[#2b2b2b]">
            <Gradients />

            {/* Title bar */}
            <header className="relative flex h-[29px] shrink-0 items-center bg-[#f3f3f3] pb-px pl-0.5 text-black">
                <div className="absolute left-1/2 top-0 h-px w-[270px] -translate-x-1/2 rounded-b bg-[#e4e4e4] shadow-sm" />
                <svg viewBox="0 0 20 20" className="mr-1.5 size-5" aria-hidden="true">
                    <rect width="20" height="20" fill="#0a0a0a" />
                    <path d="M1 1l2 5 3 3 1-3 3-4 4-1-1 4 3 3-1 5-3 4-4 1-4-2-3-6z" fill="#8d8d8d" />
                    <path d="M2 3l4 7 4 1 2-4 1 5-3 5-5-4zM13 3l4-1-2 9z" fill="#f4f4f4" />
                    <path d="M7 4l3 4-2 2M4 12l4 2" stroke="#111" fill="none" />
                </svg>
                <h1 className="flex-1">tracklighting - Rhino 7 Educational - [Perspective]</h1>
                <button aria-label="Minimize" className="flex h-full w-[58px] items-center justify-center">
                    <svg viewBox="0 0 14 14" className="size-3.5" stroke="#000" fill="none"><path d="M1 6.500h12" /></svg>
                </button>
                <button aria-label="Restore" className="flex h-full w-[58px] items-center justify-center">
                    <svg viewBox="0 0 14 14" className="size-3.5" stroke="#000" fill="none"><rect x="1.500" y="3.500" width="9" height="9" rx="1.500" /><path d="M4 1.500h6a3 3 0 0 1 3 3V10" /></svg>
                </button>
                <button aria-label="Close" className="mr-[3px] flex h-full w-[58px] items-center justify-center">
                    <svg viewBox="0 0 14 14" className="size-3.5" stroke="#000" fill="none"><path d="M1 1l12 12M13 1L1 13" /></svg>
                </button>
            </header>

            <nav className="flex h-[23px] shrink-0 items-center gap-[18px] bg-white pl-2.5 pt-0.5 text-black">
                {menus.map((m) => (
                    <button key={m}>{m}</button>
                ))}
            </nav>

            {/* Sync toolbar */}
            <div className="flex h-[42px] shrink-0 border-t border-[#f0f0f0] pb-0.5">
                <Grip />
                <div className="flex h-[37px] items-center whitespace-nowrap pl-2 text-[#444]">
                    <button className="flex w-[118px] items-center gap-1.5">
                        <Svg className="size-5">
                            <path d="M8 20A9 9 0 0 1 5 6M16 4a9 9 0 0 1 3 14M5 1l5 4-5 4M19 23l-5-4 5-4" strokeWidth="2.200" />
                        </Svg>
                        Synchronize
                    </button>
                    <button className="flex w-[162px] items-center gap-1.5">
                        <Svg className="size-[22px]">
                            <path d="M7 20A9 9 0 0 1 4 6M14 3a9 9 0 0 1 4 9M4 1l5 4-5 4" strokeWidth="2.200" />
                            <path d="M13 15l-4 4 4 3" strokeWidth="2" />
                            <path d="M17 15l6 4-6 4z" fill="#111" />
                        </Svg>
                        Toggle Auto Sync
                    </button>
                    <button className="flex w-[122px] items-center gap-1.5">
                        <Svg className="size-5">
                            <path d="M8 2v5M16 2v5" strokeWidth="3" />
                            <path d="M5 7h14v5c0 3-3 4-4 5h-6c-1-1-4-2-4-5zM10 17h4v5h-4z" fill="#111" />
                        </Svg>
                        Connections
                    </button>
                    <div className="mr-1 h-8 w-px bg-[#c9ccd4]" />
                    <button className="flex w-[147px] items-center gap-1">
                        <Svg className="size-[22px]">
                            <path d="M15 8V3H2v18h13v-5M7 12h15M18 8l4 4-4 4" strokeWidth="2" />
                        </Svg>
                        Export 3D View
                    </button>
                    <div className="mr-1.5 h-8 w-px bg-[#c9ccd4]" />
                    <button className="flex items-center gap-1">
                        <Svg className="size-5">
                            <path d="M4 2h10l6 6v14H4zM13 2v7h7M8 13h8M8 17h6" strokeWidth="2" />
                        </Svg>
                        Messages
                    </button>
                </div>
            </div>

            {/* Command history and prompt */}
            <section className="flex h-[109px] shrink-0 border-b border-[#d5dae8] pb-[3px]">
                <Grip />
                <div className="ml-0.5 flex min-w-0 flex-1 flex-col text-black">
                    <div className="flex h-[83px] border-b border-[#bcc4dc] bg-white">
                        <div className="flex flex-1 flex-col justify-end overflow-hidden pl-px">
                            <div className="-mb-px">
                                <p>Display</p>
                                <p>5 meshes added to selection.</p>
                                <p>Press Control to extrude, tap Alt to make a duplicate</p>
                                <p>Command: _Undo</p>
                                <p>Undoing Gumball move</p>
                            </div>
                        </div>
                        <div className="flex w-5 justify-center bg-[#f0f0f0] pt-9">
                            <div className="h-[21px] w-1.5 bg-[#858585]" />
                        </div>
                    </div>
                    <div className="flex h-[23px] items-center bg-white pl-px">
                        <label htmlFor="command" className="font-bold">Command:</label>
                        <div className="ml-1 h-5 w-px bg-black" />
                        <input id="command" type="text" className="h-5 flex-1 outline-none" />
                        <div className="flex w-5 flex-col gap-px">
                            <button aria-label="Previous" className="flex h-[11px] w-[18px] items-center justify-center border border-[#a8a8a8] bg-[#f0f0f0]">
                                <svg viewBox="0 0 8 5" className="h-[5px] w-2"><path d="M0 5l4-5 4 5z" /></svg>
                            </button>
                            <button aria-label="Next" className="flex h-[11px] w-[18px] items-center justify-center border border-[#a8a8a8] bg-[#f0f0f0]">
                                <svg viewBox="0 0 8 5" className="h-[5px] w-2"><path d="M0 0h8L4 5z" /></svg>
                            </button>
                        </div>
                    </div>
                </div>
            </section>

            {/* Tabbed tool bars */}
            <section className="flex h-20 shrink-0 pt-[5px]">
                <Grip />
                <div className="ml-0.5 min-w-0 flex-1">
                    <div className="flex h-6 items-end whitespace-nowrap">
                        <div className="flex h-6 items-center border-b border-[#bcc4dc]">
                            {tabsBefore.map((t) => (
                                <button key={t} className="px-[15px]">{t}</button>
                            ))}
                        </div>
                        <svg viewBox="0 0 20 24" className="-ml-3 h-6 w-5 shrink-0" fill="none" stroke="#bcc4dc"><path d="M0 23.500h2L18 1.500l2-1" /></svg>
                        <button className="h-6 rounded-tr border-r border-t border-[#bcc4dc] pl-2 pr-[15px]">Display</button>
                        <div className="flex h-6 flex-1 items-center border-b border-[#bcc4dc]">
                            {tabsAfter.map((t) => (
                                <button key={t} className="pl-4 pr-[15px]">{t}</button>
                            ))}
                            <button aria-label="Options" className="ml-auto mr-0.5 text-[#9a9a9a]"><Gear className="size-3.5" /></button>
                        </div>
                    </div>
                    <div className="flex h-[30px] items-center pl-0.5">
                        <div className="flex gap-1">
                            {displayTools.slice(0, 11).map((t) => (
                                <button key={t.name} aria-label={t.name}><Svg>{t.icon}</Svg></button>
                            ))}
                        </div>
                        <div className="mx-1 h-6 w-px bg-[#c4c7d0]" />
                        <div className="flex gap-1">
                            {displayTools.slice(11).map((t) => (
                                <button key={t.name} aria-label={t.name}><Svg>{t.icon}</Svg></button>
                            ))}
                        </div>
                    </div>
                </div>
            </section>

            {/* Palette, viewport, panels */}
            <main className="flex min-h-0 flex-1">
                <aside className="w-[79px] shrink-0 pt-[7px]">
                    <div className="mb-px ml-[3px] h-[3px] w-[70px] border-y border-[#cdd4e6]" />
                    <div className="grid w-14 grid-cols-2 pl-px">
                        {paletteTools.map((t) => (
                            <button key={t.name} aria-label={t.name} className="relative flex size-7 items-center justify-center">
                                <Svg>{t.icon}</Svg>
                                {t.more && (
                                    <svg viewBox="0 0 6 6" className="absolute bottom-0 right-0 size-1.5" aria-hidden="true">
                                        <path d="M6 0v6H0z" fill="#666" />
                                    </svg>
                                )}
                            </button>
                        ))}
                    </div>
                </aside>

                <section className="flex min-w-0 flex-1 flex-col">
                    <div className="relative mt-0.5 flex-1 overflow-hidden border border-[#bcc4dc] bg-white">
                        <Scene />
                        <button className="absolute left-0 top-0 flex h-[23px] items-center rounded-br bg-[#889fec] pl-2.5 font-bold">
                            Perspective
                            <span className="ml-2.5 h-5 w-px bg-[#222]" />
                            <svg viewBox="0 0 9 5" className="mx-0.5 h-[5px] w-[9px]"><path d="M0 0h9L4.500 5z" fill="#222" /></svg>
                        </button>
                    </div>
                    <div className="flex h-7 items-center gap-[23px] pt-px text-[#333]">
                        <button className="relative -mt-px h-[27px] self-start pl-[13px] pr-2">
                            <svg viewBox="0 0 95 27" preserveAspectRatio="none" className="absolute inset-0 size-full" fill="none" stroke="#bcc4dc" aria-hidden="true">
                                <path d="M.5 0v13l10 13.500h80q4 0 4-4V0" />
                            </svg>
                            Perspective
                        </button>
                        <button className="-ml-2.5">Top</button>
                        <button>Front</button>
                        <button>Right</button>
                        <button aria-label="New viewport">
                            <svg viewBox="0 0 12 12" className="size-3" fill="none" stroke="#888"><path d="M4.500.5h3v4h4v3h-4v4h-3v-4h-4v-3h4z" /></svg>
                        </button>
                    </div>
                </section>

                <aside className="ml-2 flex w-[628px] shrink-0 flex-col pb-[3px] pr-px pt-[5px]">
                    <div className="flex h-[22px] items-center gap-1 pl-[3px]">
                        <h2>Layers</h2>
                        <div className="h-[3px] flex-1 border-y border-[#cdd4e6]" />
                    </div>
                    <div className="flex h-7 items-end">
                        <div className="h-7 w-px" />
                        {panelTabs.map((t) => (
                            <button
                                key={t.name}
                                aria-label={t.name}
                                className={
                                    t.name === "Layers"
                                        ? "flex h-7 w-11 items-center justify-center border-x border-t border-[#bcc4dc]"
                                        : "flex h-7 w-11 items-center justify-center border-b border-[#bcc4dc] first-of-type:w-[41px]"
                                }
                            >
                                <Svg className="size-[22px]">{t.icon}</Svg>
                            </button>
                        ))}
                        <div className="flex h-7 flex-1 items-center justify-end border-b border-[#bcc4dc] text-[#bccbe6]">
                            <button aria-label="Panel options"><Gear className="size-[18px]" /></button>
                        </div>
                    </div>
                    <div className="flex min-h-0 flex-1 flex-col border-x border-b border-[#bcc4dc]">
                        <div className="flex h-[46px] shrink-0 items-center gap-1 pl-2 pt-0.5">
                            {layerTools.map((t) => (
                                <button key={t.name} aria-label={t.name} className="flex h-[22px] w-[22px] items-center justify-center">
                                    <Svg className="size-5">{t.icon}</Svg>
                                </button>
                            ))}
                        </div>
                        <div className="mr-1 min-h-0 flex-1 border-t border-[#bcc4dc] bg-white">
                            <table className="w-full table-fixed border-collapse whitespace-nowrap">
                                <colgroup>
                                    <col className="w-[188px]" />
                                    <col className="w-[76px]" />
                                    <col className="w-10" />
                                    <col className="w-10" />
                                    <col className="w-10" />
                                    <col className="w-[45px]" />
                                    <col className="w-20" />
                                    <col className="w-10" />
                                    <col />
                                </colgroup>
                                <thead>
                                    <tr className="h-[26px] text-left [&>th]:border-r [&>th]:border-[#e0e4ee] [&>th]:pl-[5px] [&>th]:font-normal">
                                        <th>Layer</th>
                                        <th className="pr-1.5 text-center">Current</th>
                                        <th className="pr-1.5 text-center">On</th>
                                        <th className="overflow-hidden">Lock</th>
                                        <th>Co...</th>
                                        <th>Mat...</th>
                                        <th>Linetype</th>
                                        <th>Pri...</th>
                                        <th className="overflow-hidden">Print Wid..</th>
                                    </tr>
                                </thead>
                                <tbody>
                                    <tr className="h-6 border-b border-[#eee] font-bold">
                                        <td className="pl-[9px]">Layer 01</td>
                                        <td>
                                            <svg viewBox="0 0 16 12" className="mx-auto h-3 w-4" fill="none" stroke="#000" strokeWidth="1.600"><path d="M.5 6l4.500 5L15.500.5" /></svg>
                                        </td>
                                        <td />
                                        <td />
                                        <td><div className="mx-auto size-[18px] border border-[#333] bg-black" /></td>
                                        <td><div className="ml-1 size-4 rounded-full bg-[#f9f9f9]" /></td>
                                        <td className="pl-1">Continu...</td>
                                        <td>
                                            <svg viewBox="0 0 18 18" className="mx-auto size-[18px]"><path d="M9 0l9 9-9 9-9-9z" /></svg>
                                        </td>
                                        <td className="pl-1">Default</td>
                                    </tr>
                                </tbody>
                            </table>
                        </div>
                        <div className="flex h-5 shrink-0 items-center bg-[#f0f0f0] pl-[21px] pr-8">
                            <div className="h-1.5 flex-1 bg-[#858585]" />
                        </div>
                    </div>
                </aside>
            </main>

            {/* Selection filter and object snaps */}
            <section className="h-[71px] shrink-0 pt-0.5">
                <CheckRow items={filters} prefix="filter" />
                <CheckRow items={snaps} prefix="snap" />
            </section>

            {/* Status bar */}
            <footer className="flex h-6 shrink-0 whitespace-nowrap border-b-2 border-t border-b-[#2f3b3e] border-t-[#bcc4dc] [&>*]:border-r [&>*]:border-[#bcc4dc] [&>*]:pt-px">
                <button className="w-[60px]">CPlane</button>
                <span className="w-[108px] text-center">x 0.399</span>
                <span className="w-[108px] text-center">y -2.192</span>
                <span className="w-[108px] text-center">z 0.000</span>
                <button className="w-[107px]">Millimeters</button>
                <button className="flex w-[209px] items-center gap-1 pl-1">
                    <span className="size-3.5 border border-[#333] bg-black" />
                    Layer 01
                </button>
                <button className="w-[81px]">Grid Snap</button>
                {modes.map((m) => (
                    <button key={m.label} className={`bg-[#cfd8ee] font-bold ${m.width}`}>{m.label}</button>
                ))}
                <button className="w-[114px]">Record History</button>
                <button className="w-[50px]">Filter</button>
                <span className="mr-2 flex-1">Minutes from last save: 0</span>
            </footer>
        </div>
    )
}
